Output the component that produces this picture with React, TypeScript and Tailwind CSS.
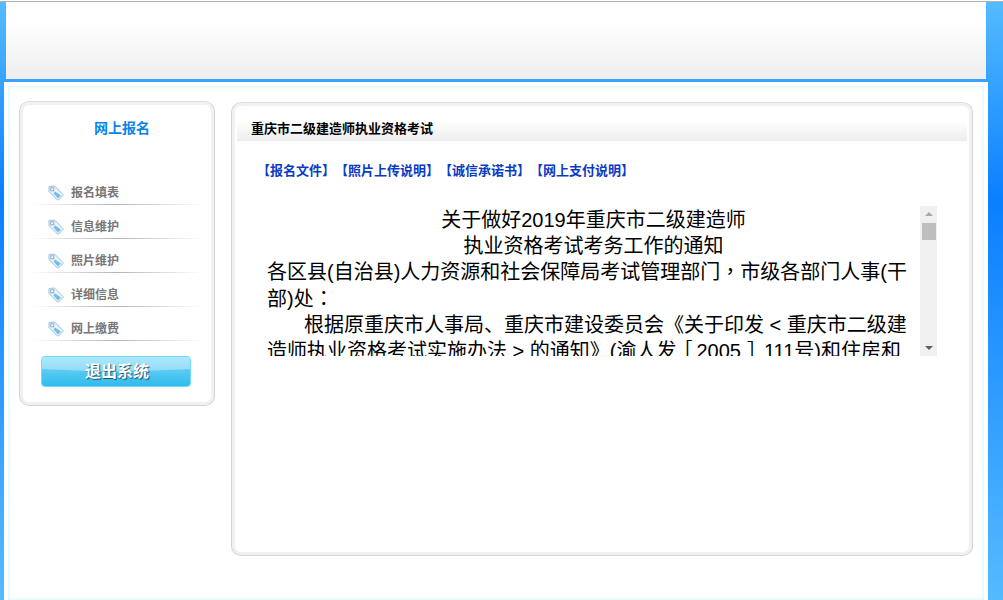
const font = "font-['Arial','Liberation_Sans','Noto_Sans_CJK_SC',sans-serif]";

const menuItems = ['报名填表', '信息维护', '照片维护', '详细信息', '网上缴费'];

const links = ['【报名文件】', '【照片上传说明】', '【诚信承诺书】', '【网上支付说明】'];

function TagIcon() {
  return (
    <svg width="16" height="16" viewBox="0 0 16 16" className="shrink-0">
      <path
        d="M1 1.5 L6.5 1 L15 9.5 Q15.5 10 15 10.5 L10.5 15 Q10 15.5 9.5 15 L1 6.5 Z"
        fill="#e8f3fa"
        stroke="#9cc2da"
        strokeWidth="1"
      />
      <path d="M7 6.5 L13 10.5 L10 13.5 L5.5 8.5 Z" fill="#74bdea" />
      <rect x="2.8" y="2.8" width="3" height="3" fill="#fff" stroke="#86aecb" strokeWidth="1" />
    </svg>
  );
}

function MenuRow({ label }: { label: string }) {
  return (
    <div className="relative flex h-[34px] items-center pl-[17px] pt-[10px]">
      <TagIcon />
      <span className="ml-[7px] text-[12px] font-bold leading-[16px] text-[#777777]">{label}</span>
      <div className="absolute bottom-0 left-0 right-0 h-px bg-[linear-gradient(to_right,#ffffff00,#b4b4b4_50%,#ffffff00)]" />
    </div>
  );
}

function SidePanel() {
  return (
    <div className="h-[305px] w-[196px] shrink-0 rounded-[10px] border border-[#d4d4d4] border-t-[#dddddd] bg-white px-[11px] shadow-[inset_0_0_0_3px_#f1f1f1]">
      <h2 className="pl-[10px] pt-[16px] text-center text-[14px] font-bold leading-[20px] text-[#0a84e8]">网上报名</h2>
      <div className="mt-[33px]">
        {menuItems.map((item) => (
          <MenuRow key={item} label={item} />
        ))}
      </div>
      <button className="relative ml-[10px] mt-[15px] h-[31px] w-[150px] overflow-hidden rounded-[4px] border border-[#72d8f8] bg-[linear-gradient(to_bottom,#7fdcf8_0%,#5ccbf4_45%,#2fbbee_100%)] pl-[2px] text-[16px] font-bold leading-[29px] text-white [text-shadow:1px_1px_1px_#174f69]">
        <span className="absolute -left-[30px] -right-[30px] top-0 h-[14px] rounded-b-[50%] bg-white/35" />
        <span className="relative">退出系统</span>
      </button>
    </div>
  );
}

function Notice() {
  const tc = "font-['Noto_Sans_CJK_TC',sans-serif] leading-none";
  return (
    <div className="ml-[20px] mt-[26px] flex h-[150px] w-[680px]">
      <div className="h-full w-[663px] overflow-hidden pl-[10px] text-[20px] leading-[26.2px] text-black">
        <p className="pt-[1px] text-center">关于做好2019年重庆市二级建造师</p>
        <p className="text-center">执业资格考试考务工作的通知</p>
        <p>
          各区县(自治县)人力资源和社会保障局考试管理部门<span className={tc}>，</span>市级各部门人事(干部)处<span className={tc}>：</span>
        </p>
        <p className="indent-[37px]">
          根据原重庆市人事局、重庆市建设委员会《关于印发 &lt; 重庆市二级建造师执业资格考试实施办法 &gt; 的通知》(渝人发
          <span className="-ml-[4px] mr-[4px]">［</span>2005<span className="ml-[6px] -mr-[3px]">］</span>111号)和住房和
        </p>
      </div>
      <div className="flex h-full w-[17px] shrink-0 flex-col items-center bg-[#f0f0f0]">
        <div className="mt-[6px] h-0 w-0 border-x-[4px] border-b-[4px] border-x-transparent border-b-[#a8a8a8]" />
        <div className="mt-[7px] h-[17px] w-[14px] bg-[#bebebe]" />
        <div className="mt-auto mb-[6px] h-0 w-0 border-x-[4px] border-t-[4px] border-x-transparent border-t-[#606060]" />
      </div>
    </div>
  );
}

function MainPanel() {
  return (
    <div className="mt-px h-[454px] w-[742px] shrink-0 rounded-[10px] border border-[#d4d4d4] border-t-[#dddddd] bg-white px-[5px] pt-[3px] shadow-[inset_0_0_0_3px_#f1f1f1]">
      <div className="mt-[15px] h-[20px] border-b border-[#ececec] bg-[linear-gradient(to_bottom,#ffffff,#eeeeee)] pl-[14px] text-[13px] font-bold leading-[16px] text-black">
        重庆市二级建造师执业资格考试
      </div>
      <div className="ml-[20px] mt-[21px] flex text-[13px] font-bold leading-[18px] text-[#0b3bc4]">
        {links.map((link) => (
          <a key={link} href="#">
            {link}
          </a>
        ))}
      </div>
      <Notice />
    </div>
  );
}

export default function App() {
  return (
    <div className={`flex h-[600px] flex-col overflow-hidden bg-[linear-gradient(to_bottom,#55bcff_0px,#0a7fff_200px,#55bbff_600px)] ${font}`}>
      <div className="h-[2px] shrink-0 border-b border-[#b0b0b0] bg-white" />
      <div className="ml-[6px] mr-[17px] h-[77px] shrink-0 bg-[linear-gradient(to_bottom,#ffffff_0%,#ffffff_25%,#eeeeee_100%)]" />
      <div className="mt-[3px] ml-[4px] mr-[15px] flex-1 bg-white pl-[4px] pr-[4px] pt-[4px]">
        <div className="flex h-full gap-[16px] pl-[11px] pt-[15px] shadow-[inset_0_0_5px_#c6f6ff]">
          <SidePanel />
          <MainPanel />
        </div>
      </div>
    </div>
  );
}
